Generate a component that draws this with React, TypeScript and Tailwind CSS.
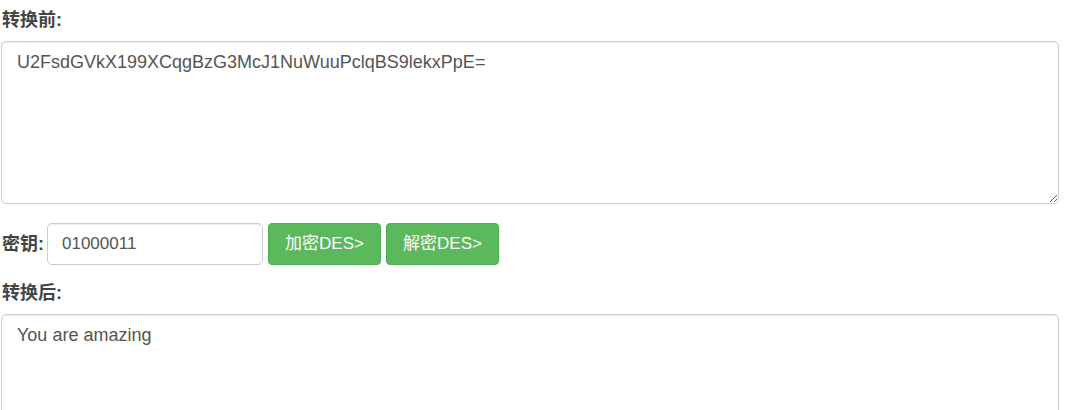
export default function App() {
  return (
    <div
      className="w-[1066px] pl-[1px] pt-[9px] text-[#333]"
      style={{ fontFamily: '"Liberation Sans", "Noto Sans CJK SC", sans-serif' }}
    >
      <div className="w-[1058px]">
        {/* Before */}
        <label className="block text-[18px] font-bold leading-[22px] pl-[1px] text-[#444]">转换前:</label>
        <textarea
          className="mt-[10px] block w-full h-[163px] rounded-[5px] border border-[#ccc] pl-[15px] pr-[16px] pt-[8px] pb-[10px] text-[18px] leading-[24px] text-[#555] shadow-[inset_0_1px_1px_rgba(0,0,0,0.075)] outline-none"
          defaultValue="U2FsdGVkX199XCqgBzG3McJ1NuWuuPclqBS9lekxPpE="
        />

        {/* Key row */}
        <div className="mt-[19px] flex items-center gap-[5px]">
          <label className="mr-[-2px] text-[18px] font-bold leading-[22px] pl-[1px] text-[#444]">密钥:</label>
          <input
            className="h-[42px] w-[216px] rounded-[5px] border border-[#ccc] px-[14px] text-[17px] text-[#555] shadow-[inset_0_1px_1px_rgba(0,0,0,0.075)] outline-none"
            defaultValue="01000011"
          />
          <button className="h-[42px] w-[113px] rounded-[4px] border border-[#4cae4c] bg-[#5cb85c] text-[17px] text-white">
            加密DES&gt;
          </button>
          <button className="h-[42px] w-[113px] rounded-[4px] border border-[#4cae4c] bg-[#5cb85c] text-[17px] text-white">
            解密DES&gt;
          </button>
        </div>

        {/* After */}
        <label className="mt-[17px] block text-[18px] font-bold leading-[22px] pl-[1px] text-[#444]">转换后:</label>
        <textarea
          className="mt-[10px] block w-full h-[163px] rounded-[5px] border border-[#ccc] pl-[15px] pr-[16px] pt-[8px] pb-[10px] text-[18px] leading-[24px] text-[#555] shadow-[inset_0_1px_1px_rgba(0,0,0,0.075)] outline-none"
          defaultValue="You are amazing"
        />
      </div>
    </div>
  );
}
